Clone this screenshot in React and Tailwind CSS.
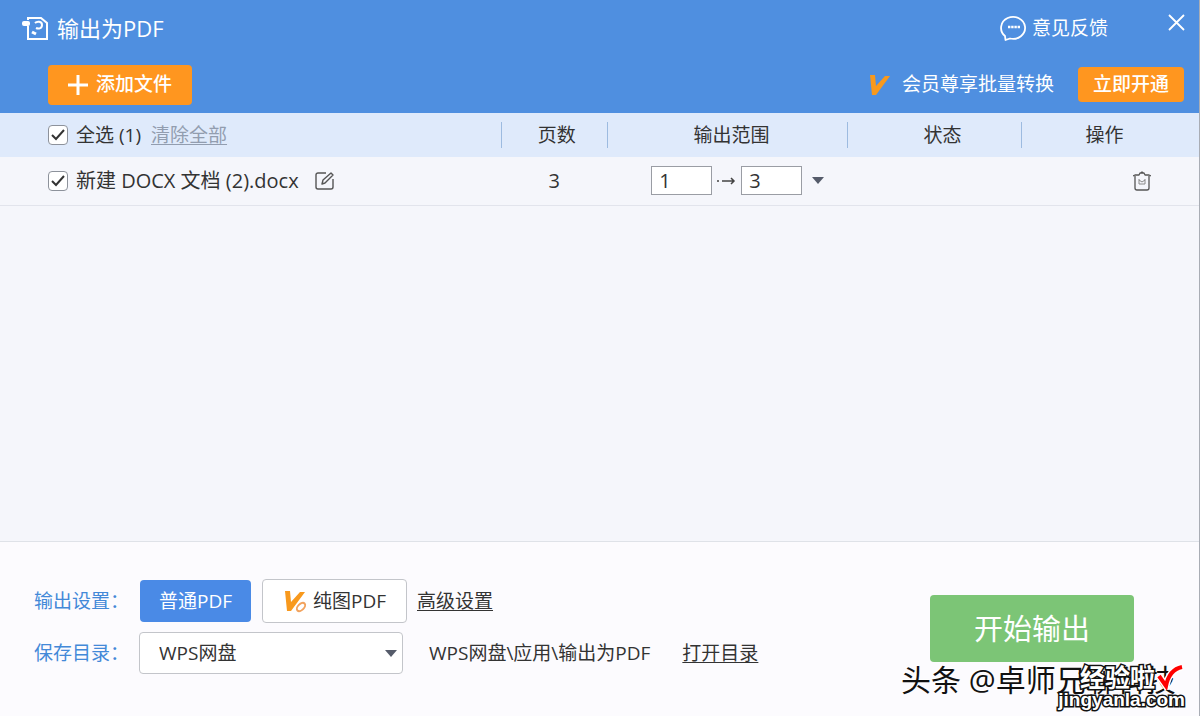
import React, { useState } from 'react';
import clsx from 'clsx';

const COLUMNS = [
  { label: '页数', width: 'w-[106px]', pad: 'pl-1' },
  { label: '输出范围', width: 'w-[20%]', pad: 'pl-2' },
  { label: '状态', width: 'w-[174px]', pad: 'pl-4' },
  { label: '操作', width: 'w-[178px]', pad: 'pr-3' },
];

function LogoIcon() {
  return (
    <svg width="27" height="26" viewBox="0 0 27 26" fill="none" stroke="#fff" strokeWidth="2" aria-hidden="true">
      <path d="M6 5V3h13l6 5v16H6V11" />
      <rect x="0" y="6" width="8" height="5" rx="2" fill="#fff" stroke="none" />
      <path d="M13 8c2-2 7-2 7 2s-4 4-6 3" />
      <path d="M10 17l4 2" strokeWidth="3" />
    </svg>
  );
}

function ChatIcon() {
  return (
    <svg width="28" height="28" viewBox="0 0 28 28" fill="none" stroke="#fff" strokeWidth="1.8" strokeLinejoin="round" aria-hidden="true">
      <path d="M5 22A12 11 0 1 1 10 24.500L5.500 26z" />
      <path d="M8 13h12" strokeWidth="2.4" strokeDasharray="2.4 0.8" />
    </svg>
  );
}

function VipIcon({ ring = false }) {
  return (
    <svg width="26" height="24" viewBox="0 0 26 24" fill="#f8991d" aria-hidden="true">
      <path d="M2 2h5l1 11L17 3h5L8 22H4z" />
      {ring ? <ellipse cx="18" cy="18" rx="5" ry="3" transform="rotate(-45 18 18)" fill="#fff" stroke="#f2a35e" strokeWidth="2" /> : null}
    </svg>
  );
}

function EditIcon() {
  return (
    <svg width="20" height="20" viewBox="0 0 20 20" fill="none" stroke="#555" strokeWidth="1.4" strokeLinejoin="round" aria-hidden="true">
      <path d="M11 2H3a2 2 0 0 0-2 2v12a2 2 0 0 0 2 2h13a2 2 0 0 0 2-2V8" />
      <path d="M7 13l1-4 8-7 2 2-8 8z" />
    </svg>
  );
}

function TrashIcon() {
  return (
    <svg width="18" height="20" viewBox="0 0 18 20" fill="none" stroke="#555" strokeWidth="1.3" strokeLinejoin="round" aria-hidden="true">
      <path d="M0 5l2-1h4l1-2h4l1 2h4l2 1M8 2l1-1 1 1M2 5v12a2 2 0 0 0 2 2h10a2 2 0 0 0 2-2V5" />
      <path d="M6 8v5h6V8M6 9l3 2 3-2" strokeWidth="1" stroke="#888" />
    </svg>
  );
}

function Caret({ className }) {
  return (
    <svg width="12" height="7" viewBox="0 0 12 7" fill="#555b6a" aria-hidden="true" className={className}>
      <path d="M0 0h12L6 7z" />
    </svg>
  );
}

function CheckBox({ checked, onChange, label }) {
  return (
    <span className="grid h-5 w-5 shrink-0 place-items-center">
      <input
        type="checkbox"
        aria-label={label}
        checked={checked}
        onChange={onChange}
        className="peer col-start-1 row-start-1 h-5 w-5 appearance-none rounded-sm border border-[#8d929b] bg-white"
      />
      <svg width="14" height="12" viewBox="0 0 14 12" fill="none" stroke="#333" strokeWidth="2" className="pointer-events-none invisible col-start-1 row-start-1 peer-checked:visible" aria-hidden="true">
        <path d="M1 6l4 4 8-9" />
      </svg>
    </span>
  );
}

function TitleBar() {
  return (
    <header className="bg-[#4f8fe0] text-white">
      <div className="flex h-14 items-center justify-between pr-[14px] pl-[22px]">
        <h1 className="flex items-center gap-2 text-[22px]">
          <LogoIcon />
          输出为PDF
        </h1>
        <div className="flex items-center gap-[60px]">
          <button type="button" className="flex items-center gap-1 text-[19px]">
            <ChatIcon />
            <span>意见反馈</span>
          </button>
          <button type="button" aria-label="关闭" className="pb-3">
            <svg width="17" height="17" viewBox="0 0 17 17" stroke="#fff" strokeWidth="1.8" aria-hidden="true">
              <path d="M1 1l15 15M16 1L1 16" />
            </svg>
          </button>
        </div>
      </div>
      <div className="flex h-[57px] items-center justify-between pl-12 pr-[15px]">
        <button type="button" className="flex h-10 w-36 items-center justify-center gap-2 rounded-sm bg-[#ff961f] text-[19px] font-medium">
          <svg width="20" height="20" viewBox="0 0 20 20" stroke="#fff" strokeWidth="3" aria-hidden="true">
            <path d="M0 10h20M10 0v20" />
          </svg>
          添加文件
        </button>
        <div className="flex items-center text-[19px]">
          <VipIcon />
          <span className="ml-2">会员尊享批量转换</span>
          <button type="button" className="ml-6 h-[35px] w-[106px] rounded-sm bg-[#ff961f] font-medium">立即开通</button>
        </div>
      </div>
    </header>
  );
}

function FileTable() {
  const [checked, setChecked] = useState(true);
  const [from, setFrom] = useState('1');
  const [to, setTo] = useState('3');
  const toggle = () => setChecked((value) => !value);

  return (
    <table className="w-full table-fixed text-[19px]">
      <thead className="bg-[#dfeafb]">
        <tr className="h-11">
          <th className="pl-12 text-left font-normal">
            <div className="flex items-center">
              <CheckBox checked={checked} onChange={toggle} label="全选" />
              <span className="ml-2">全选 (1)</span>
              <button type="button" className="ml-[10px] text-[#929daf] underline underline-offset-2">清除全部</button>
            </div>
          </th>
          {COLUMNS.map((col) => (
            <th key={col.label} className={clsx('p-0 font-normal', col.width)}>
              <div className={clsx('flex h-[26px] items-center justify-center border-l border-[#9dbbe0]', col.pad)}>{col.label}</div>
            </th>
          ))}
        </tr>
      </thead>
      <tbody>
        <tr className="h-12 border-b border-[#e2e4ec] text-xl">
          <td className="pl-12">
            <div className="flex items-center">
              <CheckBox checked={checked} onChange={toggle} label="新建 DOCX 文档 (2).docx" />
              <span className="ml-2">新建 DOCX 文档 (2).docx</span>
              <button type="button" aria-label="重命名" className="ml-4"><EditIcon /></button>
            </div>
          </td>
          <td className="text-center">3</td>
          <td className="pl-11">
            <div className="flex items-center">
              <input aria-label="起始页" value={from} onChange={(event) => setFrom(event.target.value)} className="h-[29px] w-[61px] border border-[#9a9da4] bg-white px-[7px]" />
              <svg width="19" height="10" viewBox="0 0 19 10" stroke="#444" strokeWidth="1.5" fill="none" className="mx-[5px]" aria-hidden="true">
                <path d="M0 5h2M5 5h12M14 2l3 3-3 3" />
              </svg>
              <input aria-label="结束页" value={to} onChange={(event) => setTo(event.target.value)} className="h-[29px] w-[61px] border border-[#9a9da4] bg-white px-[7px]" />
              <button type="button" aria-label="选择范围" className="ml-[10px]"><Caret /></button>
            </div>
          </td>
          <td />
          <td className="pr-12">
            <div className="flex justify-end">
              <button type="button" aria-label="删除"><TrashIcon /></button>
            </div>
          </td>
        </tr>
      </tbody>
    </table>
  );
}

function Settings() {
  return (
    <div className="flex flex-col gap-[9px] text-[19px]">
      <div className="flex h-11 items-center">
        <span className="w-[106px] text-[#4389d8]">输出设置：</span>
        <button type="button" className="h-[42px] w-[111px] rounded-sm bg-[#4a8ae6] text-white">普通PDF</button>
        <button type="button" className="ml-[11px] flex h-11 w-[145px] items-center justify-center gap-1 rounded border border-[#c3c5ca] bg-white">
          <VipIcon ring />
          纯图PDF
        </button>
        <a href="#advanced" className="ml-[10px] underline underline-offset-2">高级设置</a>
      </div>
      <div className="flex h-[42px] items-center">
        <label htmlFor="save-dir" className="w-[105px] text-[#4389d8]">保存目录：</label>
        <div className="grid items-center">
          <select id="save-dir" className="col-start-1 row-start-1 h-[42px] w-[264px] appearance-none rounded-sm border border-[#c3c5ca] bg-white pl-[19px]">
            <option>WPS网盘</option>
          </select>
          <Caret className="pointer-events-none col-start-1 row-start-1 mr-[6px] justify-self-end" />
        </div>
        <span className="ml-[26px]">WPS网盘\应用\输出为PDF</span>
        <a href="#open" className="ml-8 underline underline-offset-2">打开目录</a>
      </div>
    </div>
  );
}

function Watermark() {
  return (
    <div className="pointer-events-none absolute right-[14px] bottom-0 h-[54px] w-[284px]">
      <p className="absolute top-0 left-0 text-[30px] leading-[36px] whitespace-nowrap text-[#111] [text-shadow:-1px_-1px_0_#fff]">头条 @卓师兄聊科技</p>
      <div className="absolute right-0 bottom-[6px] text-right font-bold text-white [paint-order:stroke_fill] [-webkit-text-stroke:3px_#111]">
        <div className="flex items-end justify-end text-[25px] leading-[26px]">
          经验啦
          <svg width="30" height="26" viewBox="0 0 30 26" fill="none" aria-hidden="true">
            <path d="M4 12l7 10C13 12 17 5 27 3" stroke="#fff" strokeWidth="7" />
            <path d="M4 12l7 10C13 12 17 5 27 3" stroke="#f00" strokeWidth="4" />
          </svg>
        </div>
        <div className="font-['Liberation_Sans',sans-serif] text-[19px] leading-[20px]">jingyanla.com</div>
      </div>
    </div>
  );
}

export default function App() {
  return (
    <div className="relative flex min-h-screen flex-col border-r border-[#a9adb5] bg-[#f5f6fb] font-['Open_Sans','Noto_Sans_CJK_SC',sans-serif] text-[#333]">
      <TitleBar />
      <main className="flex-1">
        <FileTable />
      </main>
      <footer className="flex items-start justify-between border-t border-[#dfe2e8] bg-[#fcfbfe] pt-[37px] pr-[65px] pb-[42px] pl-[34px]">
        <Settings />
        <button type="button" className="mt-4 h-[67px] w-[204px] rounded-sm bg-[#7cc576] text-[29px] text-white">开始输出</button>
      </footer>
      <Watermark />
    </div>
  );
}
